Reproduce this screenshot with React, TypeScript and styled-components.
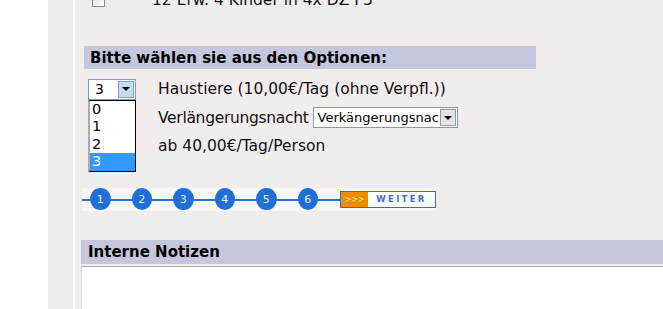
import styled, { createGlobalStyle } from "styled-components";

const GlobalStyle = createGlobalStyle`
  html, body {
    margin: 0;
    padding: 0;
    background: #ffffff;
    overflow: hidden;
  }
`;

const options = ["0", "1", "2", "3"];
const steps = [1, 2, 3, 4, 5, 6];

export default function App() {
  return (
    <>
      <GlobalStyle />
      <Page>
        <Gutter />
        <SideStrip />
        <Content>
          <BookingRow>
            <Checkbox />
            <BookingText>12 Erw. 4 Kinder in 4x DZ F3</BookingText>
          </BookingRow>

          <SectionHeader>Bitte wählen sie aus den Optionen:</SectionHeader>

          <OptionsGrid>
            <SelectCell>
              <FakeSelect $width={48}>
                <SelectValue>3</SelectValue>
                <ArrowButton $active>
                  <Arrow />
                </ArrowButton>
              </FakeSelect>
              <DropList>
                {options.map(o => (
                  <DropItem key={o} $selected={o === "3"}>{o}</DropItem>
                ))}
              </DropList>
            </SelectCell>
            <OptionText>Haustiere (10,00€/Tag (ohne Verpfl.))</OptionText>

            <span />
            <OptionLine>
              <OptionText $tight>Verlängerungsnacht</OptionText>
              <FakeSelect $width={145}>
                <SelectValue $small>Verkängerungsnacht</SelectValue>
                <ArrowButton>
                  <Arrow />
                </ArrowButton>
              </FakeSelect>
            </OptionLine>

            <span />
            <OptionText>ab 40,00€/Tag/Person</OptionText>
          </OptionsGrid>

          <StepBar>
            {steps.map(s => (
              <StepDot key={s}>{s}</StepDot>
            ))}
            <NextButton>
              <NextArrows>&gt;&gt;&gt;</NextArrows>
              <NextLabel>WEITER</NextLabel>
            </NextButton>
          </StepBar>

          <NotesHeader>Interne Notizen</NotesHeader>
          <NotesArea />
        </Content>
      </Page>
    </>
  );
}

const Page = styled.div`
  display: flex;
  width: 663px;
  height: 309px;
  overflow: hidden;
  font-family: "DejaVu Sans", Verdana, sans-serif;
`;

const Gutter = styled.div`
  width: 48px;
  background: #ffffff;
`;

const SideStrip = styled.div`
  width: 25px;
  background: #f1eded;
  border-right: 2px solid #ffffff;
`;

const Content = styled.div`
  flex: 1;
  background: #f1eded;
  padding-left: 6px;
  display: flex;
  flex-direction: column;
`;

const BookingRow = styled.div`
  display: flex;
  align-items: center;
  margin-top: -8px;
  height: 16px;
  padding-left: 11px;
`;

const Checkbox = styled.div`
  width: 11px;
  height: 11px;
  border: 1px solid #8a8a8a;
  background: linear-gradient(135deg, #dcdcdc, #ffffff);
`;

const BookingText = styled.span`
  margin-left: 47px;
  font-size: 15.5px;
  color: #111;
`;

const SectionHeader = styled.div`
  margin-top: 38px;
  margin-left: 3px;
  width: 446px;
  height: 23px;
  line-height: 24px;
  padding-left: 6px;
  background: #c5c7dd;
  font-weight: bold;
  font-size: 15px;
  color: #000;
`;

const OptionsGrid = styled.div`
  display: grid;
  grid-template-columns: 70px auto;
  grid-auto-rows: 28.5px;
  margin-top: 6px;
  margin-left: 7px;
  align-items: center;
`;

const SelectCell = styled.div`
  position: relative;
  height: 21px;
`;

const FakeSelect = styled.div<{ $width: number }>`
  width: ${p => p.$width}px;
  height: 21px;
  box-sizing: border-box;
  border: 1px solid #7f9db9;
  background: #fff;
  display: flex;
  align-items: stretch;
`;

const SelectValue = styled.div<{ $small?: boolean }>`
  flex: 1;
  overflow: hidden;
  white-space: nowrap;
  padding-left: ${p => (p.$small ? 4 : 6)}px;
  font-size: ${p => (p.$small ? 13 : 14)}px;
  line-height: 19px;
  color: #000;
`;

const ArrowButton = styled.div<{ $active?: boolean }>`
  width: 16px;
  margin: 1px;
  box-sizing: border-box;
  border: 1px solid ${p => (p.$active ? "#7f9db9" : "#9a9a9a")};
  background: ${p => (p.$active ? "#c6dcf3" : "#e4e4e4")};
  display: flex;
  align-items: center;
  justify-content: center;
`;

const Arrow = styled.div`
  width: 0;
  height: 0;
  border-left: 4px solid transparent;
  border-right: 4px solid transparent;
  border-top: 4px solid #000;
`;

const DropList = styled.div`
  position: absolute;
  top: 21px;
  left: 0;
  width: 48px;
  box-sizing: border-box;
  border: 1px solid #000;
  border-left: 2px solid #aaa;
  background: #fff;
  z-index: 2;
`;

const DropItem = styled.div<{ $selected?: boolean }>`
  height: 17.5px;
  line-height: 17.5px;
  padding-left: 2px;
  font-size: 14.5px;
  background: ${p => (p.$selected ? "#3399ff" : "#fff")};
  color: ${p => (p.$selected ? "#fff" : "#000")};
`;

const OptionLine = styled.div`
  display: flex;
  align-items: center;
  gap: 4px;
`;

const OptionText = styled.span<{ $tight?: boolean }>`
  font-size: 15.5px;
  letter-spacing: ${p => (p.$tight ? "-0.3px" : "0")};
  color: #111;
  white-space: nowrap;
`;

const StepBar = styled.div`
  margin-top: 27px;
  margin-left: 1px;
  width: 354px;
  height: 23px;
  display: flex;
  align-items: center;
  gap: 21px;
  padding-left: 8px;
  box-sizing: border-box;
  background:
    linear-gradient(#2a6fd6, #2a6fd6) 0 11px / 260px 2px no-repeat,
    #f7f7f7;
`;

const StepDot = styled.div`
  width: 22px;
  height: 22px;
  border-radius: 50%;
  background: #1f6fd4;
  color: #e8f0fb;
  font-size: 11px;
  display: flex;
  align-items: center;
  justify-content: center;
`;

const NextButton = styled.div`
  display: flex;
  height: 17px;
  box-sizing: border-box;
  border: 1px solid #2a6fd6;
  background: #fff;
  margin-left: 1px;
`;

const NextArrows = styled.div`
  width: 27px;
  background: #f08c00;
  color: #ffe9b0;
  font-size: 8px;
  line-height: 15px;
  text-align: center;
`;

const NextLabel = styled.div`
  width: 67px;
  color: #3a6fcf;
  font-size: 8.5px;
  font-weight: bold;
  letter-spacing: 2.3px;
  line-height: 15px;
  text-align: center;
`;

const NotesHeader = styled.div`
  margin-top: 29px;
  height: 24px;
  line-height: 25px;
  padding-left: 7px;
  background: #c5c7dd;
  font-weight: bold;
  font-size: 15px;
  color: #000;
`;

const NotesArea = styled.div`
  margin-top: 2px;
  flex: 1;
  background: #fff;
  border-top: 1px solid #aaa;
  border-left: 1px solid #e0e0e0;
`;
